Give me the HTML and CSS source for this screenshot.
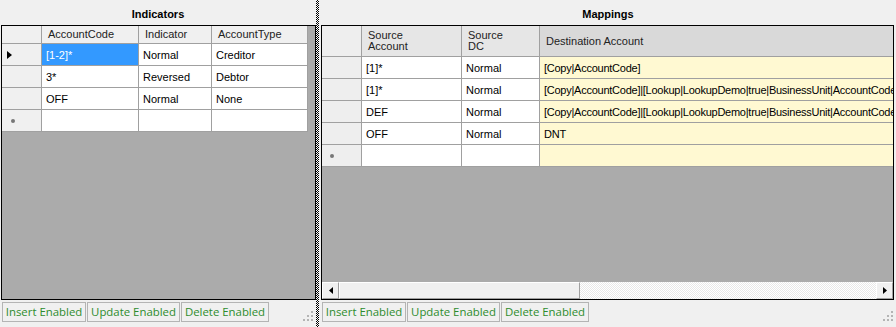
FILE: index.html
```html
<!DOCTYPE html>
<html lang="en">
<head>
    <meta charset="UTF-8">
    <title>Indicators and Mappings</title>
    <link rel="stylesheet" href="styles.css">
</head>
<body>
    <div class="form">
        <section class="panel panel-left">
            <div class="title">Indicators</div>
            <div class="grid">
                <div class="rows">
                    <div class="row head-short">
                        <div class="cell rh w-rh"></div>
                        <div class="cell hd w-code">AccountCode</div>
                        <div class="cell hd w-ind">Indicator</div>
                        <div class="cell hd w-type">AccountType</div>
                    </div>
                    <div class="row">
                        <div class="cell rh w-rh"><span class="current"></span></div>
                        <div class="cell sel w-code">[1-2]*</div>
                        <div class="cell w-ind">Normal</div>
                        <div class="cell w-type">Creditor</div>
                    </div>
                    <div class="row">
                        <div class="cell rh w-rh"></div>
                        <div class="cell w-code">3*</div>
                        <div class="cell w-ind">Reversed</div>
                        <div class="cell w-type">Debtor</div>
                    </div>
                    <div class="row">
                        <div class="cell rh w-rh"></div>
                        <div class="cell w-code">OFF</div>
                        <div class="cell w-ind">Normal</div>
                        <div class="cell w-type">None</div>
                    </div>
                    <div class="row">
                        <div class="cell rh w-rh"><span class="newrow"></span></div>
                        <div class="cell w-code"></div>
                        <div class="cell w-ind"></div>
                        <div class="cell w-type"></div>
                    </div>
                </div>
            </div>
            <div class="strip">
                <span class="flag w-insert">Insert Enabled</span>
                <span class="flag w-update">Update Enabled</span>
                <span class="flag w-delete">Delete Enabled</span>
                <svg class="grip" width="10" height="10" viewBox="0 0 10 10">
                    <rect x="8" y="0" width="2" height="2" fill="#b4b4b4"/>
                    <rect x="4" y="4" width="2" height="2" fill="#b4b4b4"/>
                    <rect x="8" y="4" width="2" height="2" fill="#b4b4b4"/>
                    <rect x="0" y="8" width="2" height="2" fill="#b4b4b4"/>
                    <rect x="4" y="8" width="2" height="2" fill="#b4b4b4"/>
                    <rect x="8" y="8" width="2" height="2" fill="#b4b4b4"/>
                </svg>
            </div>
        </section>

        <div class="splitter"></div>

        <section class="panel panel-right">
            <div class="title">Mappings</div>
            <div class="grid">
                <div class="rows">
                    <div class="row head-tall">
                        <div class="cell rh w-rh"></div>
                        <div class="cell hd w-src">Source<br>Account</div>
                        <div class="cell hd w-dc">Source<br>DC</div>
                        <div class="cell hd hd-dest w-dest">Destination Account</div>
                    </div>
                    <div class="row">
                        <div class="cell rh w-rh"></div>
                        <div class="cell w-src">[1]*</div>
                        <div class="cell w-dc">Normal</div>
                        <div class="cell dest w-dest">[Copy|AccountCode]</div>
                    </div>
                    <div class="row">
                        <div class="cell rh w-rh"></div>
                        <div class="cell w-src">[1]*</div>
                        <div class="cell w-dc">Normal</div>
                        <div class="cell dest w-dest">[Copy|AccountCode]|[Lookup|LookupDemo|true|BusinessUnit|AccountCode]</div>
                    </div>
                    <div class="row">
                        <div class="cell rh w-rh"></div>
                        <div class="cell w-src">DEF</div>
                        <div class="cell w-dc">Normal</div>
                        <div class="cell dest w-dest">[Copy|AccountCode]|[Lookup|LookupDemo|true|BusinessUnit|AccountCode]</div>
                    </div>
                    <div class="row">
                        <div class="cell rh w-rh"></div>
                        <div class="cell w-src">OFF</div>
                        <div class="cell w-dc">Normal</div>
                        <div class="cell dest w-dest">DNT</div>
                    </div>
                    <div class="row">
                        <div class="cell rh w-rh"><span class="newrow"></span></div>
                        <div class="cell w-src"></div>
                        <div class="cell w-dc"></div>
                        <div class="cell dest w-dest"></div>
                    </div>
                </div>
                <div class="hscroll">
                    <div class="sbtn">
                        <svg width="4" height="7" viewBox="0 0 4 7"><path d="M4 0 L0 3.5 L4 7 Z" fill="#000"/></svg>
                    </div>
                    <div class="thumb"></div>
                    <div class="track"></div>
                    <div class="sbtn">
                        <svg width="4" height="7" viewBox="0 0 4 7"><path d="M0 0 L4 3.5 L0 7 Z" fill="#000"/></svg>
                    </div>
                </div>
            </div>
            <div class="strip">
                <span class="flag w-insert">Insert Enabled</span>
                <span class="flag w-update">Update Enabled</span>
                <span class="flag w-delete">Delete Enabled</span>
                <svg class="grip" width="10" height="10" viewBox="0 0 10 10">
                    <rect x="8" y="0" width="2" height="2" fill="#b4b4b4"/>
                    <rect x="4" y="4" width="2" height="2" fill="#b4b4b4"/>
                    <rect x="8" y="4" width="2" height="2" fill="#b4b4b4"/>
                    <rect x="0" y="8" width="2" height="2" fill="#b4b4b4"/>
                    <rect x="4" y="8" width="2" height="2" fill="#b4b4b4"/>
                    <rect x="8" y="8" width="2" height="2" fill="#b4b4b4"/>
                </svg>
            </div>
        </section>
    </div>
</body>
</html>
```

FILE: styles.css
```css
body {
    margin: 0;
    background-color: #f0f0f0;
    font-family: "Liberation Sans", Arial, sans-serif;
    font-size: 11px;
    color: #000;
}
.form {
    display: flex;
    width: 896px;
    height: 327px;
    overflow: hidden;
}
.panel {
    display: flex;
    flex-direction: column;
    min-width: 0;
}
.panel-left {
    width: 316px;
    flex: none;
}
.panel-right {
    flex: 1;
}
.splitter {
    width: 4px;
    flex: none;
}
.splitter::before {
    content: "";
    display: block;
    width: 3px;
    height: 100%;
    background-image: repeating-conic-gradient(#000 0 25%, #fff 0 50%);
    background-size: 2px 2px;
}
.title {
    height: 25px;
    line-height: 29px;
    font-weight: bold;
    text-align: center;
}
.grid {
    height: 275px;
    box-sizing: border-box;
    border: 1px solid #000;
    background-color: #ababab;
    display: flex;
    flex-direction: column;
    overflow: hidden;
}
.panel-left .grid {
    margin-left: 1px;
}
.panel-right .grid {
    margin-left: 1px;
    margin-right: 2px;
}
.rows {
    flex: 1;
    overflow: hidden;
}
.row {
    display: flex;
    height: 22px;
}
.head-short {
    height: 18px;
}
.head-tall {
    height: 31px;
}
.cell {
    flex: none;
    box-sizing: border-box;
    border-right: 1px solid #a0a0a0;
    border-bottom: 1px solid #a0a0a0;
    background-color: #fff;
    padding: 0 4px;
    white-space: nowrap;
    overflow: hidden;
    display: flex;
    align-items: center;
}
.rh {
    background-color: #f0f0f0;
    padding: 0;
}
.hd {
    background-color: #f0f0f0;
    color: #222;
    padding-left: 6px;
    line-height: 11px;
}
.panel-right .hd {
    background-color: #e6e6e6;
}
.panel-right .rh {
    background-color: #eeeeee;
}
.hd-dest {
    background-color: #d9d9d9 !important;
}
.sel {
    background-color: #3399ff;
    color: #fff;
}
.dest {
    background-color: #fff9d2;
    letter-spacing: -0.25px;
}
.w-rh { width: 40px; }
.w-code { width: 97px; }
.w-ind { width: 73px; }
.w-type { width: 96px; }
.w-src { width: 100px; }
.w-dc { width: 78px; }
.w-dest { width: 620px; }

.current {
    width: 0;
    height: 0;
    margin-left: 5px;
    border-top: 4px solid transparent;
    border-bottom: 4px solid transparent;
    border-left: 5px solid #000;
}
.newrow {
    width: 4px;
    height: 4px;
    margin-left: 9px;
    border-radius: 50%;
    background-color: #777;
}
.panel-right .newrow {
    margin-left: 8px;
}

.hscroll {
    height: 17px;
    flex: none;
    display: flex;
}
.sbtn {
    width: 17px;
    height: 17px;
    box-sizing: border-box;
    background-color: #f0f0f0;
    border: 1px solid;
    border-color: #fff #a0a0a0 #a0a0a0 #fff;
    display: flex;
    align-items: center;
    justify-content: center;
}
.thumb {
    width: 241px;
    box-sizing: border-box;
    background-color: #f0f0f0;
    border: 1px solid;
    border-color: #fff #a0a0a0 #a0a0a0 #fff;
}
.track {
    flex: 1;
    background-image: repeating-conic-gradient(#fff 0 25%, #e8e8e8 0 50%);
    background-size: 2px 2px;
}

.strip {
    height: 27px;
    box-sizing: border-box;
    padding: 2px 0 0 2px;
    display: flex;
    align-items: flex-start;
    gap: 1px;
}
.flag {
    height: 20px;
    box-sizing: border-box;
    border: 1px solid #b4b4b4;
    color: #2d8c2d;
    font-family: "Open Sans", sans-serif;
    font-size: 11.4px;
    line-height: 18px;
    text-align: center;
}
.w-insert { width: 84px; }
.w-update { width: 93px; }
.w-delete { width: 88px; }
.grip {
    margin-left: auto;
    margin-right: 3px;
    align-self: flex-end;
    margin-bottom: 6px;
}
```
